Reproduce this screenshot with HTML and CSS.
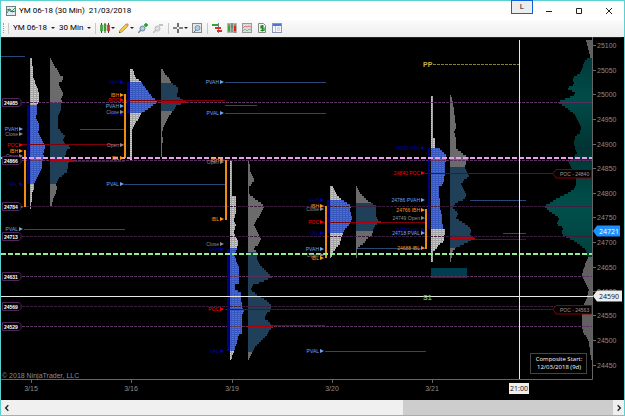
FILE: index.html
```html
<!DOCTYPE html>
<html lang="en">
<head>
<meta charset="utf-8">
<title>YM 06-18 (30 Min) 21/03/2018</title>
<link rel="stylesheet" href="styles.css">
</head>
<body>
<main class="window">
  <header class="titlebar">
    <svg class="app-icon" viewBox="0 0 10 10" aria-hidden="true">
      <rect x=".5" y=".5" width="9" height="9" fill="#e3edf5" stroke="#6b7c8a"/>
      <path d="M1 7l2-3 2 2 4-4" fill="none" stroke="#3a9a3a"/>
      <path d="M1 4l3-1 2 3 3-1" fill="none" stroke="#345f96"/>
    </svg>
    <h1 class="title">YM 06-18 (30 Min)&nbsp; 21/03/2018</h1>
    <button class="link-button" type="button">L</button>
    <div class="controls">
      <button type="button" aria-label="Minimize"><svg viewBox="0 0 8 8"><path d="M1 4.5h6"/></svg></button>
      <button type="button" aria-label="Maximize"><svg viewBox="0 0 8 8"><path d="M1.500 1.500h5v5h-5z"/></svg></button>
      <button type="button" aria-label="Close"><svg viewBox="0 0 8 8"><path d="M1 1l6 6M7 1l-6 6"/></svg></button>
    </div>
  </header>

  <nav class="toolbar" aria-label="Chart tools">
    <i class="grip"></i>
    <i class="divider"></i>
    <div class="picker"><select class="instrument" aria-label="Instrument"><option>YM 06-18</option></select><i class="caret"></i></div>
    <div class="picker"><select class="interval" aria-label="Interval"><option>30 Min</option></select><i class="caret"></i></div>
    <i class="divider"></i>
    <button type="button" class="tool drop" aria-label="Chart style">
      <svg viewBox="0 0 10 10"><path d="M1.5 0v10M5 0v10M8.5 0v10" stroke="#444"/><path d="M.5 2h2v6h-2zM4 1.5h2v6H4z" fill="#35b52d" stroke="#207a1c" stroke-width=".5"/><path d="M7.5 2h2v6h-2z" fill="#d33" stroke="#822" stroke-width=".5"/></svg><i class="caret"></i>
    </button>
    <button type="button" class="tool drop" aria-label="Drawing tools">
      <svg viewBox="0 0 10 10"><path d="M0 10l1-3 6-6 2 2-6 6z" fill="#f4c542" stroke="#a77c19" stroke-width=".6"/><path d="M7 1l1-1 2 2-1 1z" fill="#e48780"/><path d="M0 10l.5-1.500 1 1z" fill="#333"/></svg><i class="caret"></i>
    </button>
    <button type="button" class="tool" aria-label="Zoom in">
      <svg viewBox="0 0 10 10"><path d="M0 10l3-3" stroke="#7d8a94" stroke-width="1.500"/><circle cx="4.500" cy="5.500" r="2.500" fill="#a8cfec" stroke="#6d8497"/><path d="M6 2h4M8 0v4" stroke="#159a15" stroke-width="1.400"/></svg>
    </button>
    <button type="button" class="tool" aria-label="Zoom out">
      <svg viewBox="0 0 10 10"><path d="M0 10l3-3" stroke="#bbb" stroke-width="1.500"/><circle cx="4.500" cy="5.500" r="2.500" fill="#ddd" stroke="#bbb"/><path d="M6 2h4" stroke="#aaa" stroke-width="1.400"/></svg>
    </button>
    <i class="divider"></i>
    <button type="button" class="tool drop" aria-label="Crosshair">
      <svg viewBox="0 0 10 10"><path d="M5 0v4M5 6v4M0 5h4M6 5h4" stroke="#111" stroke-width="1.200"/></svg><i class="caret"></i>
    </button>
    <button type="button" class="tool" aria-label="Zoom to frame">
      <svg viewBox="0 0 10 10"><rect x=".5" y=".5" width="9" height="9" fill="#e7e7e7" stroke="#888"/><path d="M2 9l2-2" stroke="#666"/><circle cx="5.500" cy="5" r="2.500" fill="#a8cfec" stroke="#7795ad"/></svg>
    </button>
    <i class="divider"></i>
    <button type="button" class="tool" aria-label="Chart trader">
      <svg viewBox="0 0 10 10"><path d="M0 1h6v2H0z" fill="#2eab2e"/><path d="M6 0h1v10H6z" fill="#777"/><path d="M3 4h6v2H3zM5 7h5v2H5z" fill="#e02b2b"/></svg>
    </button>
    <button type="button" class="tool" aria-label="Data series">
      <svg viewBox="0 0 10 10"><path d="M0 0h10v10H0z" fill="#b5b5b5"/><path d="M2 1v8M5 0v9M8 1v9" stroke="#333" stroke-width=".6"/><path d="M1 3h2v5H1zM4 2h2v3H4z" fill="#2cae2c"/><path d="M7 3h2v5H7z" fill="#d22"/></svg>
    </button>
    <button type="button" class="tool" aria-label="Indicators">
      <svg viewBox="0 0 10 10"><rect x=".5" y=".5" width="9" height="9" fill="#ddd" stroke="#999"/><path d="M1 5l2-2 2 1 2-1 2 1" fill="none" stroke="#cf4c4c" stroke-width=".7"/><path d="M1 8l2-2 2 2 2-2 2 1" fill="none" stroke="#4ba77c" stroke-width=".7"/></svg>
    </button>
    <button type="button" class="tool" aria-label="Strategies">
      <svg viewBox="0 0 10 10"><path d="M1.500.5h5l2 2v7h-7z" fill="#f1f6f1" stroke="#888"/><path d="M7 3H4v2h3v2.500H3.500M5.300 2v6.500" fill="none" stroke="#15851b" stroke-width="1.200"/></svg>
    </button>
    <button type="button" class="tool" aria-label="Properties">
      <svg viewBox="0 0 10 10"><rect x=".5" y=".5" width="9" height="9" fill="#f6f7fb" stroke="#8c94b8"/><path d="M1 1h8v2H1z" fill="#4f73d9"/><path d="M3.500 3v6M5 5h3M5 7h3" stroke="#aab" stroke-width=".7"/></svg>
    </button>
  </nav>

  <svg class="chart" viewBox="1 37 623 363" role="img" aria-label="Market profile chart">
    <defs>
      <pattern id="cells" width="3" height="2" patternUnits="userSpaceOnUse">
        <path d="M0 0h3v1H0zM0 1h1v1H0z" fill="#000" fill-opacity=".2"/>
      </pattern>
      <linearGradient id="volume" x1="0" x2="0" y1="0" y2="1">
        <stop offset="0" stop-color="#003b39"/><stop offset=".2" stop-color="#004c49"/>
        <stop offset=".45" stop-color="#003432"/><stop offset=".75" stop-color="#00504d"/>
        <stop offset="1" stop-color="#00403d"/>
      </linearGradient>
    </defs>
    <g id="profiles"></g>
    <g id="lines"></g>
    <g class="axis">
      <path d="M1 37.500H622" class="frame"/>
      <path d="M1 379.500H592.500V37"/>
    </g>
    <g id="prices"></g>
    <g id="dates"></g>
    <g id="labels"></g>
    <g id="tags"></g>
    <path class="cursor" d="M1 296.500H593M519.500 40V379"/>
    <text class="pp" x="423" y="67">PP</text>
    <text class="s1" x="423" y="300">S1</text>
    <g class="poc-tag">
      <path d="M553 173.500l3-4h35.500v8.500H556z"/><text x="560" y="176">POC - 24840</text>
      <path d="M553 309.500l3-4h35.500v8.500H556z"/><text x="560" y="312">POC - 24563</text>
    </g>
    <path d="M593 231l4-5.500h23v11h-23z" fill="#1e90ff"/>
    <text class="flag light" x="599" y="234">24721</text>
    <path d="M593 296l4-5.500h25v11h-25z" fill="#eee"/>
    <text class="flag" x="599" y="299">24590</text>
    <path d="M509 383h20v11h-20z" fill="#eee"/>
    <text class="clock" x="519" y="391">21:00</text>
    <rect class="note-box" x="530.500" y="353.500" width="56" height="20"/>
    <text class="note" x="559" y="361">Composite Start:</text>
    <text class="note" x="559" y="369">12/03/2018 (9d)</text>
    <text class="copyright" x="2" y="378">© 2018 NinjaTrader, LLC</text>
  </svg>

  <footer class="scrollbar">
    <button type="button" aria-label="Scroll left"><svg viewBox="0 0 6 6"><path d="M4 1L2 3l2 2"/></svg></button>
    <div class="track"><div class="thumb"></div></div>
    <button type="button" aria-label="Scroll right"><svg viewBox="0 0 6 6"><path d="M2 1l2 2-2 2"/></svg></button>
  </footer>
</main>
<script src="chart.js"></script>
</body>
</html>
```
FILE: styles.css
```css
* { box-sizing: border-box; }
body { margin: 0; background: #fff; font-family: Roboto, "Open Sans", sans-serif; font-size: 8px; }
button { border: 0; padding: 0; margin: 0; background: none; font: inherit; color: inherit; }
svg { display: block; }

.window { display: flex; flex-direction: column; min-height: 100vh; border: 1px solid #5cd0d0; }

.titlebar { display: flex; align-items: center; height: 19px; padding-left: 5px; background: #fff; }
.app-icon { width: 10px; height: 10px; }
.title { flex: 1; margin: 0 0 0 3px; font-size: 8px; font-weight: 400; line-height: 12px; color: #000; }
.link-button { align-self: flex-start; width: 22px; height: 14px; margin-top: -1px; border: 1px solid #1263d2; background: #ececf1; line-height: 10px; color: #222; }
.controls { display: flex; gap: 14px; margin: 0 7px 0 8px; }
.controls button { width: 16px; height: 16px; display: grid; place-items: center; }
.controls svg { width: 8px; height: 8px; fill: none; stroke: #222; stroke-width: 1; }

.toolbar { display: flex; align-items: center; gap: 4px; height: 17px; padding: 0 3px 1px 2px; background: linear-gradient(#fbfbfb, #ededed); }
.grip { width: 1px; height: 10px; border-left: 1px dotted #999; }
.divider { width: 1px; height: 11px; background: #c8c8c8; }
.picker { display: flex; align-items: center; gap: 3px; }
.picker select { appearance: none; border: 0; padding: 0; background: none; font: inherit; line-height: 12px; color: #000; }
.instrument { width: 35px; }
.interval { width: 25px; }
.caret { border: 2px solid transparent; border-top-color: #222; border-bottom: 0; }
.tool { display: flex; align-items: center; height: 12px; margin-right: 1px; }
.tool svg { width: 10px; height: 10px; }
.drop { gap: 1px; margin-right: 0; }

.chart { width: 100%; height: auto; background: #000; font-family: "Liberation Sans", Arial, sans-serif; }
.axis path { fill: none; stroke: #666; }
.axis .frame { stroke: #222; }
.price, .date, .copyright { font-size: 7px; fill: #8c8c8c; }
.date, .clock, .note { text-anchor: middle; }
.tick { stroke: #666; }
.flag, .clock { font-family: "Open Sans", sans-serif; font-size: 7px; fill: #111; }
.light { fill: #fff; }
.note { font-family: "Open Sans", sans-serif; font-size: 6px; fill: #fff; }
.note-box { fill: #000; stroke: #444; }
.cursor { fill: none; stroke: #e8e8e8; }
.pp, .s1 { font-size: 7px; font-weight: 700; fill: #d2b048; }
.s1 { fill: #69c81c; }
.poc-tag path { fill: #080000; stroke: #850000; }
.poc-tag text { font-size: 5px; fill: #999; }
.tag path { fill: #000; stroke: #51265a; }
.tag text { font-size: 5px; font-weight: 700; fill: #fff; }

.level { stroke: #5a3360; stroke-dasharray: 3 1; }
.level.dim { stroke: #3a1f3d; }
.pink { stroke: #eb9fe9; stroke-width: 2; stroke-dasharray: 5 2; }
.green { stroke: #90ee90; stroke-width: 2; stroke-dasharray: 5 2; }
.pivot { stroke: #8b8136; stroke-dasharray: 3 1; }
.red { stroke: #800009; }
.red-bar { stroke: #b40008; stroke-width: 2; }
.steel { stroke: #284875; }
.ib { stroke: #f08c12; stroke-width: 2; }
.va { stroke: #000080; stroke-width: 2; }

.label { font-size: 5px; text-anchor: end; }
.k-va { fill: #0000a8; }
.k-ib { fill: #ff9710; }
.k-poc { fill: #f00; }
.k-prev { fill: #6ba5f4; }
.k-day { fill: #8c8c8c; }

.scrollbar { display: flex; flex: 1; min-height: 14px; background: #f0f0f0; }
.scrollbar button { width: 11px; display: grid; place-items: center; }
.scrollbar svg { width: 8px; height: 8px; fill: none; stroke: #222; stroke-width: 1; }
.track { flex: 1; display: flex; justify-content: flex-end; }
.thumb { width: 35%; background: #cdcdcd; }
```
FILE: chart.js
```js
const NS = 'http://www.w3.org/2000/svg';

function draw(parent, tag, attrs, text) {
  const node = document.createElementNS(NS, tag);
  for (const key in attrs) node.setAttribute(key, attrs[key]);
  if (text) node.textContent = text;
  (typeof parent === 'string' ? document.getElementById(parent) : parent).appendChild(node);
  return node;
}

// Width of a profile at price row y, from [y, width, y, width, ...] samples.
function widthAt(samples, y) {
  for (let i = 0; i < samples.length - 2; i += 2) {
    if (y <= samples[i + 2]) {
      const span = samples[i + 2] - samples[i];
      return samples[i + 1] + (samples[i + 3] - samples[i + 1]) * (y - samples[i]) / span;
    }
  }
  return samples[samples.length - 1];
}

function profile(x, samples, top, bottom, fill, options) {
  const dir = options.left ? -1 : 1;
  const first = samples[0], last = samples[samples.length - 2];
  const band = (from, to, color) => {
    let d = `M${x} ${from}`;
    for (let y = from; y < to; y += 2) {
      const w = Math.max(1, Math.round(widthAt(samples, y + 1)));
      d += `H${x + dir * w}V${Math.min(y + 2, to)}`;
    }
    d += `H${x}Z`;
    draw('profiles', 'path', { d, fill: color });
    if (options.cells) draw('profiles', 'path', { d, fill: 'url(#cells)' });
  };
  if (top > first) band(first, top, options.tail);
  band(top, bottom, fill);
  if (bottom < last) band(bottom, last, options.tail);
}

const tpo = { cells: true, tail: '#cdcdcd' };
const vol = { cells: false, tail: '#6b6b6b' };
const BLUE = '#456fef', SLATE = '#1f4058';

profile(30, [58,2,76,3,82,5,93,9,100,9,105,7,110,7,118,6,124,9,128,9,132,8,140,12,147,15,154,13,157,14,162,12,168,12,175,8,184,4,190,4,193,2,209,1], 105, 184, BLUE, tpo);
profile(50, [58,1,65,4,68,6,74,9,77,13,80,13,83,9,88,10,92,13,95,13,98,11,103,13,104,11,110,11,116,8,128,8,132,11,136,15,141,13,145,15,147,22,150,17,157,15,160,22,163,18,167,18,172,17,178,9,184,6,189,7,195,5,200,3,207,1], 103, 184, SLATE, vol);
profile(130, [69,3,75,4,78,6,82,11,86,14,90,17,94,20,97,22,100,27,103,26,106,22,109,18,113,12,118,9,122,6,126,4,131,2,160,2], 82, 113, BLUE, tpo);
profile(161, [69,1,74,4,78,8,83,10,87,17,92,17,95,15,98,19,101,23,103,22,106,15,111,12,117,7,122,5,128,2,133,1,140,2,145,1,157,1], 83, 111, SLATE, vol);
profile(230, [160,2,195,2,196,6,213,6,220,4,225,6,232,4,236,5,242,8,248,7,256,4,260,6,268,9,283,9,284,5,290,5,292,11,300,11,310,13,311,14,314,12,333,12,335,9,342,7,351,4,360,1], 248, 351, BLUE, tpo);
profile(248, [160,1,170,2,175,4,180,7,183,4,187,1,194,1,198,6,204,14,208,16,213,13,218,10,225,6,230,8,235,11,240,13,245,10,248,5,252,9,258,9,262,10,267,14,272,19,277,24,281,16,285,5,290,3,295,9,300,18,305,23,310,23,314,18,318,16,321,20,327,25,330,22,335,19,340,14,346,8,352,4,360,1], 252, 352, SLATE, vol);
profile(330, [186,2,190,4,194,6,198,10,200,12,203,17,206,21,211,20,219,22,222,21,228,16,233,13,238,11,244,10,248,6,252,3,258,1], 200, 233, BLUE, tpo);
profile(356, [186,1,192,3,196,7,200,11,203,15,206,20,216,20,220,22,223,22,227,18,231,17,236,16,239,10,243,8,247,3,250,1,258,1], 203, 231, SLATE, vol);
profile(431, [96,2,137,2,138,4,147,4,148,8,152,12,155,15,162,15,163,14,173,14,180,13,186,11,187,8,209,9,210,10,229,12,230,14,241,13,245,8,250,4,252,2,262,2], 148, 229, BLUE, tpo);
profile(450, [95,1,103,3,110,4,120,5,127,6,132,4,140,6,148,6,155,14,158,19,162,16,168,15,176,19,180,14,184,11,190,14,195,17,200,13,203,6,208,3,213,8,218,6,223,14,228,20,232,21,235,19,238,24,241,20,245,12,248,6,252,2,262,1], 167, 248, SLATE, vol);
profile(592, [40,6,48,4,57,2,58,4,62,8,70,10,74,12,76,17,80,19,84,17,88,25,90,22,93,17,96,19,99,27,102,35,105,30,110,23,115,17,120,14,128,11,133,12,137,17,143,18,148,17,153,15,157,18,161,24,164,23,168,20,173,19,178,16,185,16,190,19,195,28,198,34,203,42,206,48,209,45,213,40,218,32,222,35,225,34,228,28,232,30,236,28,240,20,245,12,250,6,257,4,262,6,268,8,275,10,279,9,284,6,290,3,300,6,305,9,315,10,325,10,331,9,335,7,342,3,350,2,360,1], 58, 257, 'url(#volume)', { left: true, tail: '#606060' });
draw('profiles', 'rect', { x: 431, y: 268, width: 36, height: 10, fill: '#003d4e' });

const hline = (kind, y, x1, x2) => draw('lines', 'line', { class: kind, x1, x2, y1: y, y2: y });
const vline = (kind, x, y1, y2) => draw('lines', 'line', { class: kind, x1: x, x2: x, y1, y2 });

[[102.5, 24985], [160.5, 24866], [206.5, 24784, 'dim'], [236.5, 24713, 'dim'], [276.5, 24631], [306.5, 24569, 'dim'], [326.5, 24529]].forEach(([y, price, tone = '']) => {
  hline(`level ${tone}`, y, 22, 592);
  const tag = draw('tags', 'g', { class: 'tag' });
  draw(tag, 'path', { d: `M2.500 ${y - 4}H19l2 2v4l-2 2H2.500Z` });
  draw(tag, 'text', { x: 4, y: y + 2 }, String(price));
});
[[56.5,1,25],[129.5,80,125],[229.5,24,125],[184.5,124,225],[82.500,225,326],[105.5,225,257],[113.5,225,326],[351.5,325,426],[248.5,358,426],[200.5,470,526],[233.5,503,526]].forEach(([y, a, b]) => hline('steel', y, a, b));
[[144.5,20,125],[161.5,74,125],[100.5,124,225],[309.5,225,555],[325.5,273,325],[222.5,324,426],[239.5,475,526],[173.5,425,555]].forEach(([y, a, b]) => hline('red', y, a, b));
[[161,50,74],[102,161,186],[326,248,273],[222,356,381],[239,450,475]].forEach(([y, a, b]) => hline('red-bar', y, a, b));
[[25,150,207],[125,94,158],[226,160,220],[326,206,258],[426,209,249]].forEach(([x, a, b]) => vline('ib', x, a, b));
[[28,105,184],[128,82,113],[228,249,351],[328,200,233],[429,148,229]].forEach(([x, a, b]) => vline('va', x, a, b));
hline('pink', 158, 1, 592);
hline('green', 254, 1, 592);
hline('pivot', 64.5, 433, 519);

const COLUMNS = {
  20: [['va','VAH',105],['prev','PVAH',129],['day','Close',134],['poc','POC',145],['ib','IBH',151],['day','Open',156],['va','VAL',184],['ib','IBL',207],['prev','PVAL',229]],
  121: [['va','VAH',82],['ib','IBH',95],['poc','POC',100],['prev','PVAH',106],['va','VAL',114],['day','Close',112],['day','Open',145],['ib','IBL',158],['prev','PVAL',184]],
  221: [['prev','PVAH',82],['prev','PVAL',113],['ib','IBH',160],['day','Open',162],['ib','IBL',219],['day','Close',244],['va','VAH',249],['poc','POC',309],['va','VAL',351]],
  321: [['va','VAH',200],['day','Close',209],['ib','IBH',206],['poc','POC',222],['va','VAL',233],['prev','PVAH',249],['day','Open',255],['ib','IBL',258],['prev','PVAL',351]],
  422: [['va','24890 VAH',148],['poc','24840 POC',173],['prev','24786 PVAH',200],['ib','24766 IBH',210],['day','24749 Open',218],['va','24725 VAL',230],['prev','24718 PVAL',233],['ib','24688 IBL',248]]
};
for (const key in COLUMNS) {
  const x = Number(key);
  for (const [kind, name, y] of COLUMNS[key]) {
    draw('labels', 'text', { class: `label k-${kind}`, x: x - 2, y: y + 2 }, name);
    draw('labels', 'path', { class: `k-${kind}`, d: `M${x - 1} ${y - 2}l4 2-4 2z` });
  }
}

[45, 70, 94, 119, 144, 168, 193, 217, 242, 267, 291, 315, 340, 365].forEach((y, i) => {
  draw('prices', 'line', { class: 'tick', x1: 593, x2: 596, y1: y + .5, y2: y + .5 });
  draw('prices', 'text', { class: 'price', x: 597, y: y + 3 }, String(25100 - 50 * i));
});
[[31, '3/15'], [131, '3/16'], [232, '3/19'], [332, '3/20'], [432, '3/21']].forEach(([x, day]) => {
  draw('dates', 'line', { class: 'tick', x1: x + .5, x2: x + .5, y1: 380, y2: 383 });
  draw('dates', 'text', { class: 'date', x, y: 391 }, day);
});
```
